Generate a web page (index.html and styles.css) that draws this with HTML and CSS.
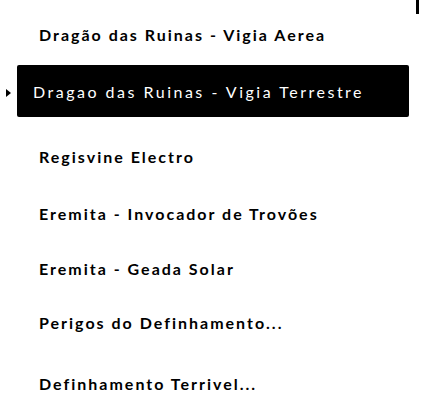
FILE: index.html
```html
<!DOCTYPE html>
<html lang="pt">
<head>
<meta charset="utf-8">
<link rel="stylesheet" href="styles.css">
</head>
<body>
<div class="panel">
  <div class="scroll-thumb"></div>
  <ul class="list">
    <li class="item item-a">Dragão das Ruinas - Vigia Aerea</li>
    <li class="item item-b selected"><span class="marker"></span>Dragao das Ruinas - Vigia Terrestre</li>
    <li class="item item-c">Regisvine Electro</li>
    <li class="item item-d">Eremita - Invocador de Trovões</li>
    <li class="item item-e">Eremita - Geada Solar</li>
    <li class="item item-f">Perigos do Definhamento...</li>
    <li class="item item-g">Definhamento Terrivel...</li>
  </ul>
</div>
</body>
</html>
```

FILE: styles.css
```css
html, body {
  margin: 0;
  padding: 0;
  background: #fff;
}

.panel {
  position: relative;
  width: 421px;
  height: 419px;
  overflow: hidden;
  font-family: Lato, "Open Sans", sans-serif;
  font-weight: 700;
  font-size: 16px;
  letter-spacing: 2px;
  color: #000;
}

.scroll-thumb {
  position: absolute;
  top: 0;
  left: 416px;
  width: 3px;
  height: 14px;
  background: #000;
}

.list {
  list-style: none;
  margin: 0;
  padding: 8px 0 0 17px;
  width: 392px;
  display: flex;
  flex-direction: column;
  gap: 2px;
}

.item {
  position: relative;
  height: 52px;
  display: flex;
  align-items: center;
  padding-left: 22px;
  border-radius: 2px;
  white-space: nowrap;
}

.item-b { margin-top: 3px; }
.item-c { margin-top: 11px; }
.item-d { margin-top: 3px; }
.item-e { margin-top: 1px; }
.item-g { margin-top: 7px; }

.selected {
  background: #000;
  color: #fff;
  font-weight: 400;
  letter-spacing: 2.5px;
  padding-left: 16px;
}

.marker {
  position: absolute;
  left: -11px;
  top: 24px;
  width: 0;
  height: 0;
  border-top: 4.5px solid transparent;
  border-bottom: 4.5px solid transparent;
  border-left: 5px solid #000;
}
```
